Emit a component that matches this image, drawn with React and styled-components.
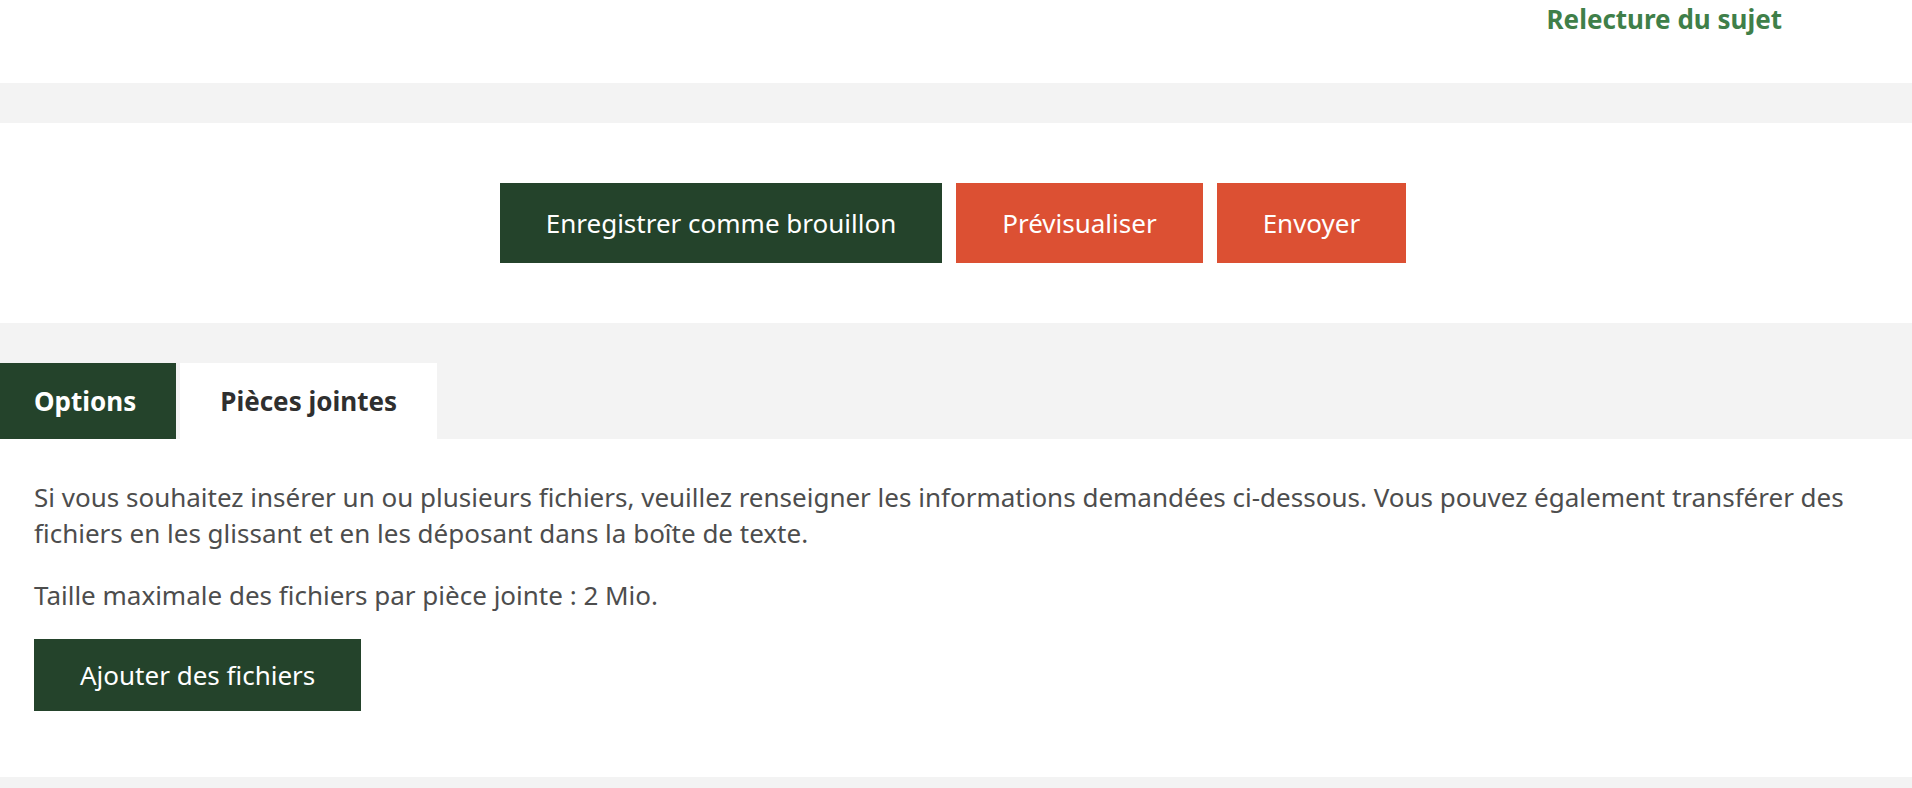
import React, { useState } from "react"
import styled, { createGlobalStyle } from "styled-components"

const GlobalStyle = createGlobalStyle`
  body {
    margin: 0;
    background: #fff;
    font-family: "Noto Sans", "Open Sans", sans-serif;
    color: #4d4d4d;
  }
`

const green = "#24432b"
const orange = "#dc5033"
const grey = "#f3f3f3"

const Page = styled.div`
  display: flex;
  flex-direction: column;
  min-height: 788px;
  background: ${grey};
`

const Header = styled.header`
  display: flex;
  justify-content: flex-end;
  height: 83px;
  padding-right: 130px;
  background: #fff;
`

const Title = styled.h2`
  margin: 0;
  font-size: 26px;
  line-height: 38px;
  font-weight: 700;
  color: #3f7f49;
`

const Band = styled.div`
  height: ${(p) => p.h}px;
  background: ${grey};
`

const Actions = styled.section`
  display: flex;
  justify-content: center;
  gap: 14px;
  padding: 60px 6px 60px 0;
  background: #fff;
`

const Button = styled.button`
  height: ${(p) => (p.small ? 72 : 80)}px;
  padding: 0 46px;
  border: 0;
  border-radius: 0;
  background: ${(p) => (p.variant === "danger" ? orange : green)};
  color: #fff;
  font-family: inherit;
  font-size: 26px;
  cursor: pointer;
`

const TabBar = styled.div`
  display: flex;
  gap: 4px;
  height: 76px;
  background: ${grey};
`

const Tab = styled.button`
  padding: 0 40px;
  border: 0;
  background: ${(p) => (p.active ? "#fff" : green)};
  color: ${(p) => (p.active ? "#2f2f2f" : "#fff")};
  font-family: inherit;
  font-size: 26px;
  font-weight: 700;
  cursor: pointer;

  &:first-child {
    padding-left: 34px;
  }
`

const Panel = styled.div`
  padding: 40px 34px 66px;
  background: #fff;
`

const Text = styled.p`
  margin: 0 0 26px;
  font-size: 26px;
  line-height: 36px;
  &:last-of-type {
    margin-bottom: 26px;
  }
`

export default function App() {
  const [tab, setTab] = useState("files")

  return (
    <>
      <GlobalStyle />
      <Page>
        <Header>
          <Title>Relecture du sujet</Title>
        </Header>
        <Band h={40} />
        <Actions>
          <Button>Enregistrer comme brouillon</Button>
          <Button variant="danger">Prévisualiser</Button>
          <Button variant="danger">Envoyer</Button>
        </Actions>
        <Band h={40} />
        <TabBar>
          <Tab active={tab === "options"} onClick={() => setTab("options")}>
            Options
          </Tab>
          <Tab active={tab === "files"} onClick={() => setTab("files")}>
            Pièces jointes
          </Tab>
        </TabBar>
        <Panel>
          <Text>
            Si vous souhaitez insérer un ou plusieurs fichiers, veuillez
            renseigner les informations demandées ci-dessous. Vous pouvez
            également transférer des fichiers en les glissant et en les
            déposant dans la boîte de texte.
          </Text>
          <Text>Taille maximale des fichiers par pièce jointe : 2 Mio.</Text>
          <Button small>Ajouter des fichiers</Button>
        </Panel>
      </Page>
    </>
  )
}
